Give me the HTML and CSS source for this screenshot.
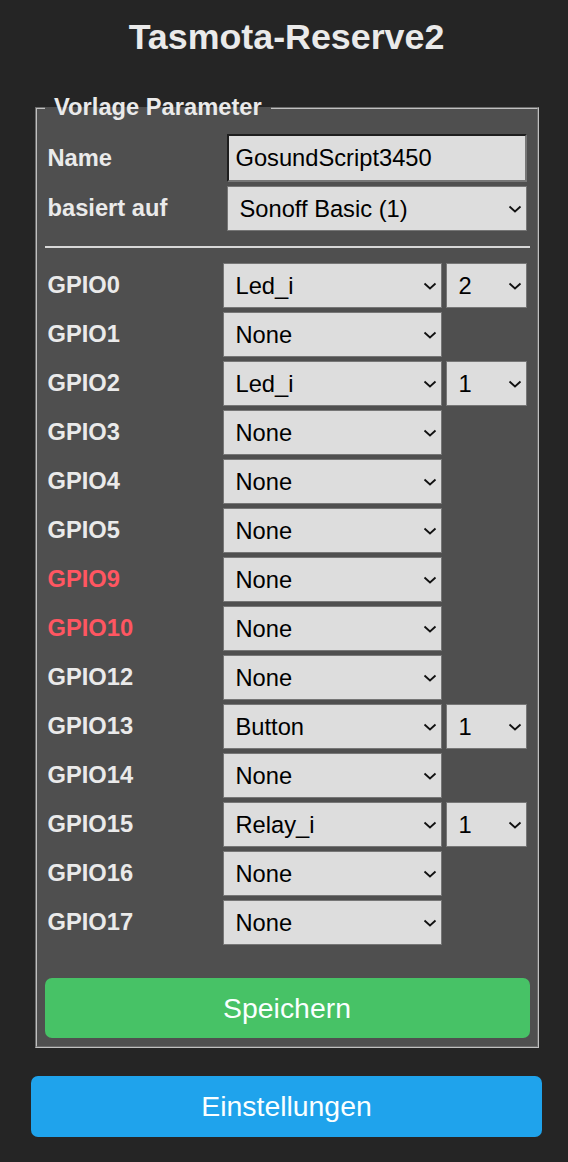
FILE: index.html
```html
<!DOCTYPE html>
<html lang="de">
<head>
    <meta charset="UTF-8">
    <meta name="viewport" content="width=device-width, initial-scale=1.0">
    <title>Tasmota-Reserve2 - Vorlage</title>
    <link rel="stylesheet" href="styles.css">
</head>
<body>
    <div class="page">
        <h2 class="title">Tasmota-Reserve2</h2>

        <form>
            <fieldset>
                <legend><b>&nbsp;Vorlage Parameter&nbsp;</b></legend>
                <table class="head">
                    <tr>
                        <td><b>Name</b></td>
                        <td class="field"><input id="s1" value="GosundScript3450"></td>
                    </tr>
                    <tr>
                        <td><b>basiert auf</b></td>
                        <td>
                            <span class="sel">
                                <select id="g99"><option>Sonoff Basic (1)</option></select>
                                <svg class="chev" width="14" height="8" viewBox="0 0 14 8"><path d="M1.5 1.5L7 6.5L12.5 1.5" /></svg>
                            </span>
                        </td>
                    </tr>
                </table>
                <hr>
                <table class="gpio">
                    <tr>
                        <td><b>GPIO0</b></td>
                        <td class="fn"><span class="sel"><select><option>Led_i</option></select><svg class="chev" width="14" height="8" viewBox="0 0 14 8"><path d="M1.5 1.5L7 6.5L12.5 1.5" /></svg></span></td>
                        <td class="ix"><span class="sel"><select><option>2</option></select><svg class="chev" width="14" height="8" viewBox="0 0 14 8"><path d="M1.5 1.5L7 6.5L12.5 1.5" /></svg></span></td>
                    </tr>
                    <tr>
                        <td><b>GPIO1</b></td>
                        <td class="fn"><span class="sel"><select><option>None</option></select><svg class="chev" width="14" height="8" viewBox="0 0 14 8"><path d="M1.5 1.5L7 6.5L12.5 1.5" /></svg></span></td>
                        <td class="ix"></td>
                    </tr>
                    <tr>
                        <td><b>GPIO2</b></td>
                        <td class="fn"><span class="sel"><select><option>Led_i</option></select><svg class="chev" width="14" height="8" viewBox="0 0 14 8"><path d="M1.5 1.5L7 6.5L12.5 1.5" /></svg></span></td>
                        <td class="ix"><span class="sel"><select><option>1</option></select><svg class="chev" width="14" height="8" viewBox="0 0 14 8"><path d="M1.5 1.5L7 6.5L12.5 1.5" /></svg></span></td>
                    </tr>
                    <tr>
                        <td><b>GPIO3</b></td>
                        <td class="fn"><span class="sel"><select><option>None</option></select><svg class="chev" width="14" height="8" viewBox="0 0 14 8"><path d="M1.5 1.5L7 6.5L12.5 1.5" /></svg></span></td>
                        <td class="ix"></td>
                    </tr>
                    <tr>
                        <td><b>GPIO4</b></td>
                        <td class="fn"><span class="sel"><select><option>None</option></select><svg class="chev" width="14" height="8" viewBox="0 0 14 8"><path d="M1.5 1.5L7 6.5L12.5 1.5" /></svg></span></td>
                        <td class="ix"></td>
                    </tr>
                    <tr>
                        <td><b>GPIO5</b></td>
                        <td class="fn"><span class="sel"><select><option>None</option></select><svg class="chev" width="14" height="8" viewBox="0 0 14 8"><path d="M1.5 1.5L7 6.5L12.5 1.5" /></svg></span></td>
                        <td class="ix"></td>
                    </tr>
                    <tr>
                        <td><b class="warn">GPIO9</b></td>
                        <td class="fn"><span class="sel"><select><option>None</option></select><svg class="chev" width="14" height="8" viewBox="0 0 14 8"><path d="M1.5 1.5L7 6.5L12.5 1.5" /></svg></span></td>
                        <td class="ix"></td>
                    </tr>
                    <tr>
                        <td><b class="warn">GPIO10</b></td>
                        <td class="fn"><span class="sel"><select><option>None</option></select><svg class="chev" width="14" height="8" viewBox="0 0 14 8"><path d="M1.5 1.5L7 6.5L12.5 1.5" /></svg></span></td>
                        <td class="ix"></td>
                    </tr>
                    <tr>
                        <td><b>GPIO12</b></td>
                        <td class="fn"><span class="sel"><select><option>None</option></select><svg class="chev" width="14" height="8" viewBox="0 0 14 8"><path d="M1.5 1.5L7 6.5L12.5 1.5" /></svg></span></td>
                        <td class="ix"></td>
                    </tr>
                    <tr>
                        <td><b>GPIO13</b></td>
                        <td class="fn"><span class="sel"><select><option>Button</option></select><svg class="chev" width="14" height="8" viewBox="0 0 14 8"><path d="M1.5 1.5L7 6.5L12.5 1.5" /></svg></span></td>
                        <td class="ix"><span class="sel"><select><option>1</option></select><svg class="chev" width="14" height="8" viewBox="0 0 14 8"><path d="M1.5 1.5L7 6.5L12.5 1.5" /></svg></span></td>
                    </tr>
                    <tr>
                        <td><b>GPIO14</b></td>
                        <td class="fn"><span class="sel"><select><option>None</option></select><svg class="chev" width="14" height="8" viewBox="0 0 14 8"><path d="M1.5 1.5L7 6.5L12.5 1.5" /></svg></span></td>
                        <td class="ix"></td>
                    </tr>
                    <tr>
                        <td><b>GPIO15</b></td>
                        <td class="fn"><span class="sel"><select><option>Relay_i</option></select><svg class="chev" width="14" height="8" viewBox="0 0 14 8"><path d="M1.5 1.5L7 6.5L12.5 1.5" /></svg></span></td>
                        <td class="ix"><span class="sel"><select><option>1</option></select><svg class="chev" width="14" height="8" viewBox="0 0 14 8"><path d="M1.5 1.5L7 6.5L12.5 1.5" /></svg></span></td>
                    </tr>
                    <tr>
                        <td><b>GPIO16</b></td>
                        <td class="fn"><span class="sel"><select><option>None</option></select><svg class="chev" width="14" height="8" viewBox="0 0 14 8"><path d="M1.5 1.5L7 6.5L12.5 1.5" /></svg></span></td>
                        <td class="ix"></td>
                    </tr>
                    <tr>
                        <td><b>GPIO17</b></td>
                        <td class="fn"><span class="sel"><select><option>None</option></select><svg class="chev" width="14" height="8" viewBox="0 0 14 8"><path d="M1.5 1.5L7 6.5L12.5 1.5" /></svg></span></td>
                        <td class="ix"></td>
                    </tr>
                </table>
                <button type="button" class="button bgrn">Speichern</button>
            </fieldset>
        </form>

        <form>
            <button type="button" class="button back">Einstellungen</button>
        </form>
    </div>
</body>
</html>
```

FILE: styles.css
```css
body {
    margin: 0;
    background: #252525;
    color: #eaeaea;
    font-family: 'Liberation Sans', Arial, sans-serif;
    font-size: 23.7px;
}

.page {
    width: 511px;
    margin-left: 31px;
    padding-top: 17px;
}

.title {
    margin: 0 0 36px;
    font-size: 35.8px;
    line-height: 41px;
    text-align: center;
}

form {
    margin: 0;
}

fieldset {
    margin: 0 3px 0 4px;
    padding: 10px 7.5px 7.5px;
    border: 2px groove #c0c0c0;
    background: #4f4f4f;
}

legend {
    padding: 0 3px;
    line-height: 27px;
}

table {
    width: 100%;
    border-spacing: 2px;
}

td {
    padding: 1px;
    vertical-align: middle;
}

.head .field {
    width: 300px;
}

.gpio .fn {
    width: 219px;
}

.gpio .ix {
    width: 81px;
}

.warn {
    color: #ff5661;
}

input {
    display: block;
    width: 100%;
    height: 48px;
    box-sizing: border-box;
    margin: 0;
    padding: 0 7px;
    border: 2px solid;
    border-color: #1e1e1e #767676 #767676 #1e1e1e;
    background: #dddddd;
    color: #000;
    font: inherit;
}

.sel {
    position: relative;
    display: block;
}

select {
    display: block;
    width: 100%;
    height: 45px;
    box-sizing: border-box;
    margin: 0;
    padding: 0 26px 0 12px;
    border: 1px solid #767676;
    border-radius: 0;
    background: #dddddd;
    color: #000;
    font: inherit;
    appearance: none;
    -webkit-appearance: none;
}

/* dropdown arrow */
.chev {
    position: absolute;
    right: 5px;
    top: 50%;
    margin-top: -4px;
    pointer-events: none;
}

.chev path {
    fill: none;
    stroke: #111;
    stroke-width: 1.8;
}

hr {
    height: 0;
    margin: 12px 0;
    border: 0;
    border-top: 2px solid #d8d8d8;
}

.button {
    display: block;
    width: 100%;
    height: 61px;
    border: 0;
    border-radius: 7px;
    background: #1fa3ec;
    color: #faffff;
    font-family: inherit;
    font-size: 28.4px;
    cursor: pointer;
}

.bgrn {
    height: 60px;
    margin-top: 30px;
    background: #47c266;
}

.back {
    margin-top: 28px;
}
```
